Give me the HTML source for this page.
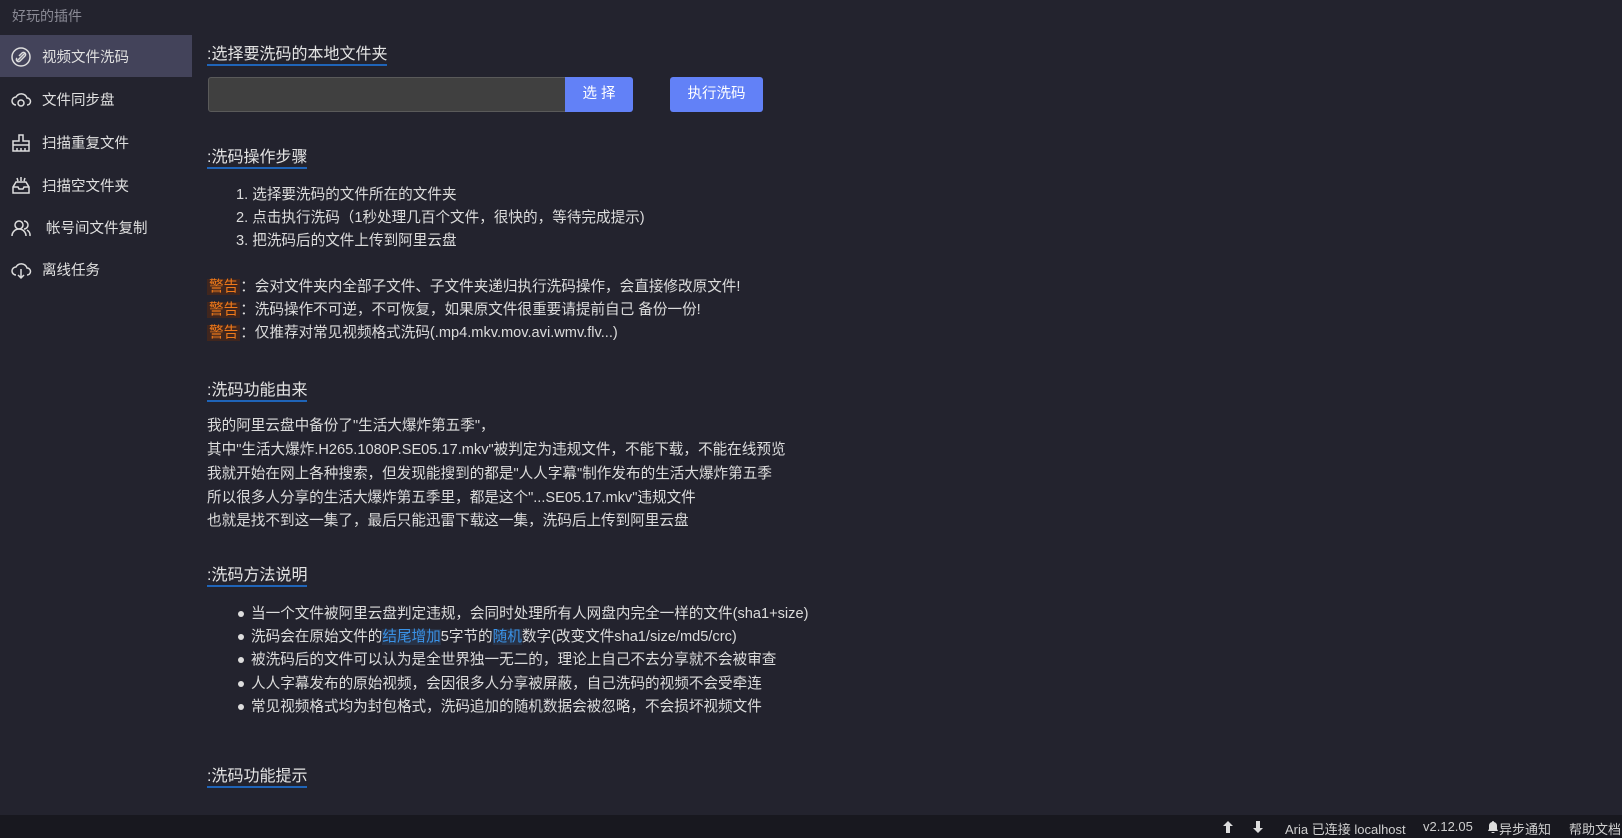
<!DOCTYPE html>
<html><head><meta charset="utf-8"><style>
*{margin:0;padding:0;box-sizing:border-box}
body{width:1622px;height:838px;background:#23232e;color:#dcdcdc;font-family:"Liberation Sans","Noto Sans CJK SC",sans-serif;position:relative;overflow:hidden}
.a{position:absolute;white-space:nowrap}
.side-title{left:12px;top:6px;font-size:14px;color:#8a8a95}
.item{left:0;width:192px;height:42px;font-size:14.5px;color:#e0e0e0;display:flex;align-items:center}
.item svg{position:absolute;left:10px;top:11px}
.item span{position:absolute;left:42px}
.active{background:#43435a}
.h{left:207px;font-size:16px;color:#e4e4e4;border-bottom:2px solid #1f64b8;line-height:19px;padding-bottom:0}
.t{font-size:14.6px;color:#dcdcdc;line-height:20px}
.w{background:#40261e;color:#f07a1a;padding:0 2px}
.l{background:#283246;color:#3a92e6}
.dot{width:6px;height:6px;border-radius:50%;background:#ddd;position:absolute;left:-13px;top:7px}
.foot{left:0;top:815px;width:1622px;height:23px;background:#18181f}
.f{top:819px;font-size:13px;color:#cfcfcf}
</style></head><body>
<div class="a side-title">好玩的插件</div>
<div class="a item active" style="top:35px"><svg width="22" height="22" viewBox="0 0 22 22" fill="none" stroke="#ddd" stroke-width="1.5"><circle cx="11" cy="11" r="9"/><path d="M7 15l8-8M9 10l3-3a2 2 0 013 3l-3 3M13 12l-3 3a2 2 0 01-3-3"/></svg><span>视频文件洗码</span></div>
<div class="a item" style="top:78px"><svg width="22" height="22" viewBox="0 0 22 22" fill="none" stroke="#ddd" stroke-width="1.5"><path d="M6 16a4 4 0 010-8 6 6 0 0111 1 3.5 3.5 0 010 7"/><circle cx="11" cy="14" r="3"/></svg><span>文件同步盘</span></div>
<div class="a item" style="top:121px"><svg width="22" height="22" viewBox="0 0 22 22" fill="none" stroke="#ddd" stroke-width="1.5"><path d="M9 3h4v6h6v10H3V9h6zM3 13h16M7 16v3M11 16v3M15 16v3"/></svg><span>扫描重复文件</span></div>
<div class="a item" style="top:164px"><svg width="22" height="22" viewBox="0 0 22 22" fill="none" stroke="#ddd" stroke-width="1.5"><path d="M3 12l3-5h10l3 5v6H3zM3 12h5l1 2h4l1-2h5M7 3l1 3M11 2v4M15 3l-1 3"/></svg><span>扫描空文件夹</span></div>
<div class="a item" style="top:206px"><svg width="22" height="22" viewBox="0 0 22 22" fill="none" stroke="#ddd" stroke-width="1.5"><circle cx="9" cy="8" r="4"/><path d="M2 19a7 7 0 0114 0M14 4a4 4 0 010 8M17 13a6 6 0 013 6"/></svg><span style="left:46px">帐号间文件复制</span></div>
<div class="a item" style="top:248px"><svg width="22" height="22" viewBox="0 0 22 22" fill="none" stroke="#ddd" stroke-width="1.5"><path d="M6 16a4 4 0 010-8 6 6 0 0111 1 3.5 3.5 0 010 7M11 10v9M8 16l3 3 3-3"/></svg><span>离线任务</span></div>

<div class="a h" style="top:45px">:选择要洗码的本地文件夹</div>
<div class="a" style="left:208px;top:77px;width:358px;height:35px;background:#404040;border:1px solid #5a5a5a;border-radius:3px 0 0 3px"></div>
<div class="a" style="left:565px;top:77px;width:68px;height:35px;background:#6281f7;border-radius:0 3px 3px 0;color:#fff;font-size:14.5px;text-align:center;line-height:35px">选 择</div>
<div class="a" style="left:670px;top:77px;width:93px;height:35px;background:#6281f7;border-radius:3px;color:#fff;font-size:14.5px;text-align:center;line-height:35px">执行洗码</div>

<div class="a h" style="top:148px">:洗码操作步骤</div>
<div class="a t" style="left:236px;top:185px">1. 选择要洗码的文件所在的文件夹</div>
<div class="a t" style="left:236px;top:208px">2. 点击执行洗码（1秒处理几百个文件，很快的，等待完成提示)</div>
<div class="a t" style="left:236px;top:231px">3. 把洗码后的文件上传到阿里云盘</div>
<div class="a t" style="left:207px;top:277px"><span class="w">警告</span>：会对文件夹内全部子文件、子文件夹递归执行洗码操作，会直接修改原文件!</div>
<div class="a t" style="left:207px;top:300px"><span class="w">警告</span>：洗码操作不可逆，不可恢复，如果原文件很重要请提前自己 备份一份!</div>
<div class="a t" style="left:207px;top:323px"><span class="w">警告</span>：仅推荐对常见视频格式洗码(.mp4.mkv.mov.avi.wmv.flv...)</div>

<div class="a h" style="top:381px">:洗码功能由来</div>
<div class="a t" style="left:207px;top:416px">我的阿里云盘中备份了"生活大爆炸第五季"，</div>
<div class="a t" style="left:207px;top:440px">其中"生活大爆炸.H265.1080P.SE05.17.mkv"被判定为违规文件，不能下载，不能在线预览</div>
<div class="a t" style="left:207px;top:464px">我就开始在网上各种搜索，但发现能搜到的都是"人人字幕"制作发布的生活大爆炸第五季</div>
<div class="a t" style="left:207px;top:488px">所以很多人分享的生活大爆炸第五季里，都是这个"...SE05.17.mkv"违规文件</div>
<div class="a t" style="left:207px;top:511px">也就是找不到这一集了，最后只能迅雷下载这一集，洗码后上传到阿里云盘</div>

<div class="a h" style="top:566px">:洗码方法说明</div>
<div class="a t" style="left:251px;top:604px"><i class="dot"></i>当一个文件被阿里云盘判定违规，会同时处理所有人网盘内完全一样的文件(sha1+size)</div>
<div class="a t" style="left:251px;top:627px"><i class="dot"></i>洗码会在原始文件的<span class="l">结尾增加</span>5字节的<span class="l">随机</span>数字(改变文件sha1/size/md5/crc)</div>
<div class="a t" style="left:251px;top:650px"><i class="dot"></i>被洗码后的文件可以认为是全世界独一无二的，理论上自己不去分享就不会被审查</div>
<div class="a t" style="left:251px;top:674px"><i class="dot"></i>人人字幕发布的原始视频，会因很多人分享被屏蔽，自己洗码的视频不会受牵连</div>
<div class="a t" style="left:251px;top:697px"><i class="dot"></i>常见视频格式均为封包格式，洗码追加的随机数据会被忽略，不会损坏视频文件</div>

<div class="a h" style="top:767px">:洗码功能提示</div>

<div class="a foot"></div>
<svg class="a" style="left:1223px;top:821px" width="10" height="12" viewBox="0 0 10 12"><path d="M5 0L10 5H7v7H3V5H0z" fill="#ddd"/></svg>
<svg class="a" style="left:1253px;top:821px" width="10" height="12" viewBox="0 0 10 12"><path d="M5 12L10 7H7V0H3v7H0z" fill="#ddd"/></svg>
<div class="a f" style="left:1285px">Aria 已连接 localhost</div>
<div class="a f" style="left:1423px">v2.12.05</div>
<svg class="a" style="left:1488px;top:821px" width="10" height="12" viewBox="0 0 10 12"><path d="M5 0a1 1 0 011 1 4 4 0 013 4v3l1 2H0l1-2V5a4 4 0 013-4 1 1 0 011-1zM3.5 11h3a1.5 1.5 0 01-3 0z" fill="#ddd"/></svg>
<div class="a f" style="left:1499px">异步通知</div>
<div class="a f" style="left:1569px">帮助文档</div>
</body></html>
